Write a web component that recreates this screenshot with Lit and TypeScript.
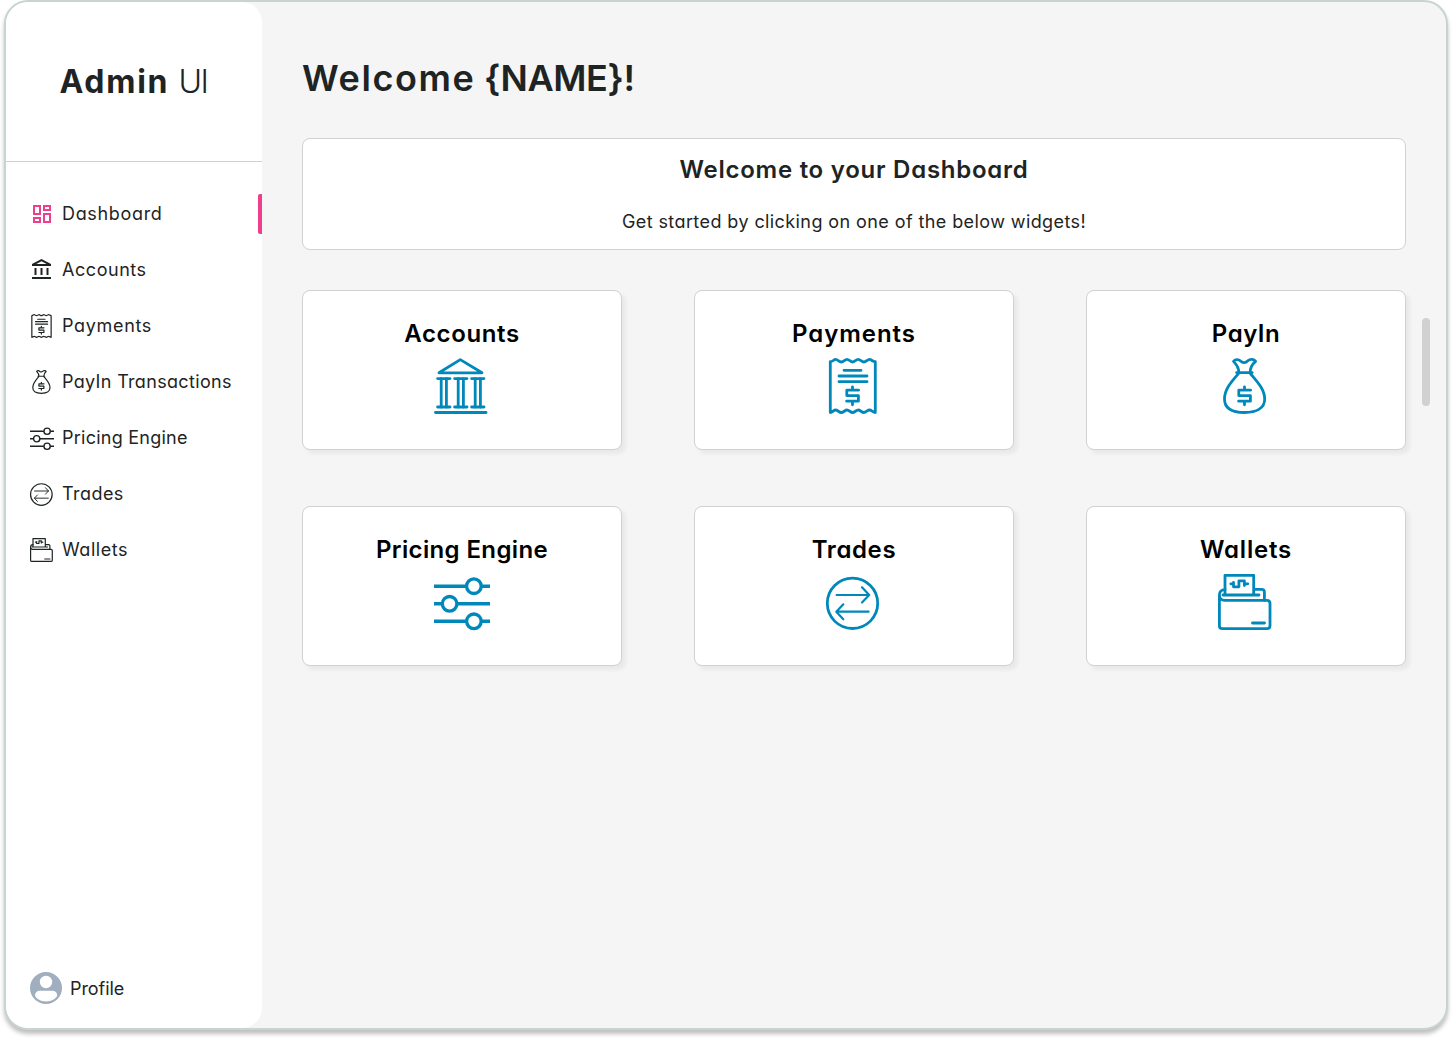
import { LitElement, html, css, svg } from "lit";
import { customElement, property } from "lit/decorators.js";
import { styleMap } from "lit/directives/style-map.js";

const dollar = svg`<path d="M26.5 28.8V32M26.5 43.2V46.8M32.6 32.2H20.8V37.6H32.4V43.2H20.6" />`;

const shapes: Record<string, unknown> = {
  bank: svg`
    <path d="M26.3 1.6L5 14.8H48Z" />
    <path d="M3.6 20.6H16M20.6 20.6H33M37.6 20.6H50M3.6 49H16M20.6 49H33M37.6 49H50" />
    <path d="M7.2 20.6V49M12.4 20.6V49M24.2 20.6V49M29.4 20.6V49M41.2 20.6V49M46.4 20.6V49" />
    <path d="M1.5 54.5H52" />`,
  receipt: svg`
    <path d="M4.3 3.6C6.6 4 7.6 1.4 9.6 1.4S13 4 15.3 4S19 1.4 21 1.4S24.6 4 26.6 4S30.2 1.4 32.2 1.4S35.7 4 37.9 4S41.5 1.4 43.5 1.4S47 4 49.3 3.6V54.5C47 54.5 45.5 52 43.5 52S40 54.5 37.9 54.5S34.2 52 32.2 52S28.6 54.5 26.6 54.5S23 52 21 52S17.4 54.5 15.3 54.5S11.6 52 9.6 52S6.600 54.5 4.3 54.5Z" />
    <path d="M18 12.3H35M13 18H41M13 23.7H41" />${dollar}`,
  bag: svg`
    <path d="M20.5 15.5C14 23 6.5 31 6.5 41C6.5 50 14 54.5 26.4 54.5S46.7 50 46.7 41C46.7 31 38.5 23 32.3 15.5" />
    <path d="M18.6 14.6H34.2M20.8 14.6C21 9.5 18 6 15.5 3.4C17.5 1 20.5 1.2 23 3.4C25.5 5.2 28 4.8 30 2.6C32.5 .6 36 1.2 37.6 3.4C34.5 6 32 9.5 32.2 14.6" />${dollar}`,
  sliders: svg`
    <path stroke-linecap="butt" stroke-width="3.4" d="M0 12.2H32.3M47 12.2H56M0 29.8H8.2M23 29.8H56M0 47.3H32.3M47 47.3H56" />
    <circle cx="39.9" cy="12.2" r="7.3" stroke-width="3.3" />
    <circle cx="15.6" cy="29.8" r="7.3" stroke-width="3.3" />
    <circle cx="39.9" cy="47.3" r="7.3" stroke-width="3.3" />`,
  trades: svg`
    <circle cx="26.5" cy="29.3" r="25.2" />
    <path stroke-width="2.2" d="M10.6 21H43M36 13.3L43.2 21L36 28.4M42.6 37.7H10.4M17.3 30.3L10.3 37.7L17.3 45.3" />`,
  wallet: svg`
    <path d="M7 15.6C3.3 15.8 1.4 18 1.4 21V51.8C1.4 53.8 2.5 54.7 4.3 54.7H49C51 54.7 52 53.7 52 51.8V29.5C52 27.4 51 26.4 49 26.4H6.5C3.5 26.4 1.4 24.5 1.4 21" />
    <path d="M7 21V1.3H35.7V21M5 21H41M35.7 15.4H43.5C45.5 15.4 46.4 16.3 46.4 18V26.4M34.5 49H46.5" />
    <path d="M12.8 9.8H15.5M15.5 8.500V12.8H20.9V6.9H26.400V11.5M26.400 9.8H29.8" />`,
};

@customElement("line-icon")
class LineIcon extends LitElement {
  @property() name = "";

  static styles = css`
    :host { display: block; flex: none; }
    .glyph {
      display: block;
      width: 100%;
      height: 100%;
      fill: none;
      stroke: currentColor;
      stroke-width: 2.8;
      stroke-linecap: round;
      stroke-linejoin: round;
      overflow: visible;
    }
    .solid { fill: currentColor; stroke: none; }
  `;

  render() {
    if (this.name === "dashboard")
      return html`<svg class="glyph solid" viewBox="0 0 24 24"><path d="M19 5v2h-4V5h4M9 5v6H5V5h4m10 8v6h-4v-6h4M9 17v2H5v-2h4M21 3h-8v6h8V3zM11 3H3v10h8V3zm10 8h-8v10h8V11zm-10 4H3v6h8v-6z"/></svg>`;
    if (this.name === "bank-small")
      return html`<svg class="glyph solid" viewBox="0 0 24 24"><path d="M6.5 10h-2v7h2v-7zm6 0h-2v7h2v-7zm8.5 9H2v2h19v-2zm-2.5-9h-2v7h2v-7zm-7-6.74L16.71 6H6.29l5.21-2.74m0-2.26L2 6v2h19V6l-9.5-5z"/></svg>`;
    return html`<svg class="glyph" viewBox="0 0 56 56">${shapes[this.name]}</svg>`;
  }
}

interface Entry {
  label: string;
  icon: string;
  /** Letter spacing in px. */
  tracking: number;
  active?: boolean;
}

const nav: Entry[] = [
  { label: "Dashboard", icon: "dashboard", tracking: 0.67, active: true },
  { label: "Accounts", icon: "bank-small", tracking: 0.55 },
  { label: "Payments", icon: "receipt", tracking: 0.67 },
  { label: "PayIn Transactions", icon: "bag", tracking: 0.33 },
  { label: "Pricing Engine", icon: "sliders", tracking: 0.24 },
  { label: "Trades", icon: "trades", tracking: 0.45 },
  { label: "Wallets", icon: "wallet", tracking: 0.52 },
];

const widgets: Entry[] = [
  { label: "Accounts", icon: "bank", tracking: 0.62 },
  { label: "Payments", icon: "receipt", tracking: 0.95 },
  { label: "PayIn", icon: "bag", tracking: 0.5 },
  { label: "Pricing Engine", icon: "sliders", tracking: 0.38 },
  { label: "Trades", icon: "trades", tracking: 0.6 },
  { label: "Wallets", icon: "wallet", tracking: 0.8 },
];

const spaced = (e: Entry) => styleMap({ letterSpacing: `${e.tracking}px` });

@customElement("app-root")
class AppRoot extends LitElement {
  static styles = css`
    :host {
      display: block;
      box-sizing: border-box;
      height: 1038px;
      padding: 0 4px 8px;
      overflow: hidden;
      background: #fff;
      color: #1e2423;
      font-family: Inter, "Liberation Sans", sans-serif;
      font-feature-settings: "cv11";
    }
    * { box-sizing: border-box; margin: 0; }
    .frame {
      display: flex;
      height: 1030px;
      border: 2px solid #c8d4d0;
      border-radius: 24px;
      background: #f5f5f5;
      box-shadow: 0 4px 4px rgba(0, 0, 0, 0.25);
    }
    .sidebar {
      display: flex;
      flex-direction: column;
      flex: none;
      width: 256px;
      background: #fff;
      border-radius: 22px 20px 20px 22px;
    }
    .brand {
      height: 160px;
      padding-left: 53.5px;
      border-bottom: 1px solid #d1d1d1;
      font-size: 32px;
      line-height: 160px;
      white-space: pre;
    }
    .strong { font-weight: 700; letter-spacing: 1.7px; }
    .light { font-weight: 300; letter-spacing: -1.6px; margin-left: 2px; }
    .nav {
      display: flex;
      flex-direction: column;
      gap: 16px;
      padding: 32px 0 0 24px;
      flex: 1;
    }
    .item {
      display: flex;
      align-items: center;
      gap: 8px;
      height: 40px;
      font-size: 18px;
      line-height: 40px;
      white-space: nowrap;
    }
    .item line-icon { width: 24px; height: 24px; }
    .active line-icon { color: #ef3e8c; }
    .active::after {
      content: "";
      width: 4px;
      height: 40px;
      margin-left: auto;
      border-radius: 2px 0 0 2px;
      background: #ef3e8c;
    }
    .profile {
      display: flex;
      align-items: center;
      gap: 8px;
      height: 80px;
      padding-left: 24px;
      font-size: 18px;
      letter-spacing: -0.06px;
      font-feature-settings: normal;
    }
    .avatar { width: 32px; height: 32px; }
    .main { flex: 1; padding: 48px 0 0 40px; }
    .title {
      height: 56px;
      font-size: 36px;
      line-height: 56px;
      font-weight: 600;
    }
    .greeting { letter-spacing: 1.6px; }
    .user { letter-spacing: -0.4px; }
    .banner {
      width: 1104px;
      height: 112px;
      margin-top: 32px;
      padding-top: 12px;
      border: 1px solid #d1d1d1;
      border-radius: 8px;
      background: #fff;
      text-align: center;
    }
    .heading { font-size: 24px; line-height: 38px; font-weight: 600; letter-spacing: 0.75px; }
    .hint { margin-top: 19px; font-size: 18px; line-height: 28px; letter-spacing: 0.41px; }
    .area { display: flex; gap: 16px; padding-top: 40px; }
    .grid {
      display: grid;
      grid-template-columns: repeat(3, 320px);
      grid-auto-rows: 160px;
      gap: 56px 72px;
    }
    .card {
      display: flex;
      flex-direction: column;
      align-items: center;
      padding-top: 25px;
      border: 1px solid #d1d1d1;
      border-radius: 8px;
      background: #fff;
      box-shadow: 4px 4px 4px rgba(0, 0, 0, 0.05);
      color: #000;
    }
    .name { font-size: 24px; line-height: 36px; font-weight: 600; }
    .card line-icon { width: 56px; height: 56px; margin-top: 6px; color: #0088bb; }
    .thumb {
      width: 8px;
      height: 88px;
      margin-top: 28px;
      border-radius: 4px;
      background: #d1d1d1;
    }
  `;

  render() {
    return html`
      <div class="frame">
        <aside class="sidebar">
          <div class="brand"><span class="strong">Admin</span><span class="light"> UI</span></div>
          <nav class="nav">
            ${nav.map(
              (n) => html`<div class="item ${n.active ? "active" : ""}">
                <line-icon name=${n.icon}></line-icon><span style=${spaced(n)}>${n.label}</span>
              </div>`
            )}
          </nav>
          <div class="profile">
            <svg class="avatar" viewBox="0 0 32 32">
              <circle cx="16" cy="16" r="16" fill="#a0aec0" />
              <circle cx="16" cy="10" r="6.2" fill="#fff" />
              <path fill="#fff" d="M5 23.8C5 20.6 7 18.8 10 18.8H22.2C25.2 18.8 27.2 20.6 27.2 23.8C25.5 27 21.5 29.4 16 29.4S6.7 27 5 23.8Z" />
            </svg>
            <span>Profile</span>
          </div>
        </aside>
        <main class="main">
          <h1 class="title"><span class="greeting">Welcome</span><span class="user"> {NAME}!</span></h1>
          <section class="banner">
            <h2 class="heading">Welcome to your Dashboard</h2>
            <p class="hint">Get started by clicking on one of the below widgets!</p>
          </section>
          <div class="area">
            <div class="grid">
              ${widgets.map(
                (w) => html`<div class="card">
                  <div class="name" style=${spaced(w)}>${w.label}</div>
                  <line-icon name=${w.icon}></line-icon>
                </div>`
              )}
            </div>
            <div class="thumb"></div>
          </div>
        </main>
      </div>
    `;
  }
}
